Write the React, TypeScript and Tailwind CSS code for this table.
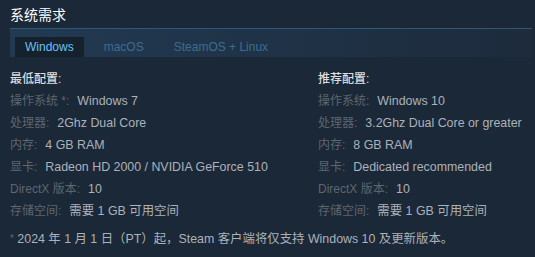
import React from "react";

const font = { fontFamily: '"Liberation Sans", Arial, "Noto Sans CJK SC", sans-serif' };

const minRows: [string, string][] = [
  ["操作系统 *:", "Windows 7"],
  ["处理器:", "2Ghz Dual Core"],
  ["内存:", "4 GB RAM"],
  ["显卡:", "Radeon HD 2000 / NVIDIA GeForce 510"],
  ["DirectX 版本:", "10"],
  ["存储空间:", "需要 1 GB 可用空间"],
];

const recRows: [string, string][] = [
  ["操作系统:", "Windows 10"],
  ["处理器:", "3.2Ghz Dual Core or greater"],
  ["内存:", "8 GB RAM"],
  ["显卡:", "Dedicated recommended"],
  ["DirectX 版本:", "10"],
  ["存储空间:", "需要 1 GB 可用空间"],
];

function Column({ title, rows, width }: { title: string; rows: [string, string][]; width: string }) {
  return (
    <div className={width}>
      <div className="text-[12px] leading-[21px] text-[#dcdedf] font-medium">{title}</div>
      {rows.map(([l, v]) => (
        <div key={l} className="leading-[22px] whitespace-nowrap flex items-baseline">
          <span className="text-[12px] text-[#5e666e]">{l}</span>
          <span className="text-[12.4px] text-[#acb2b8] ml-[8px]">{v}</span>
        </div>
      ))}
    </div>
  );
}

export default function App() {
  return (
    <div className="w-[535px] h-[257px] bg-[#1b2838] pl-[10px] pr-[3px] pt-[7px] overflow-hidden" style={font}>
      <div className="text-[14px] leading-[16px] text-[#ffffff]">系统需求</div>
      <div className="mt-[5px] h-[29px] border-t border-[#2f5878] bg-gradient-to-r from-[#213a52] to-[#1d2b3c] flex items-end pl-[5px] gap-[10px]">
        <div className="h-[20px] px-[10px] bg-[#16212e] text-[#67c1f5] text-[12px] leading-[20px]">Windows</div>
        <div className="h-[20px] px-[10px] text-[#3d6d8f] text-[12px] leading-[20px]">macOS</div>
        <div className="h-[20px] px-[10px] text-[#3d6d8f] text-[12px] leading-[20px]">SteamOS + Linux</div>
      </div>
      <div className="mt-[12px] flex">
        <Column title="最低配置:" rows={minRows} width="w-[308px]" />
        <Column title="推荐配置:" rows={recRows} width="flex-1" />
      </div>
      <div className="mt-[6px] text-[12.4px] leading-[22px] text-[#acb2b8] whitespace-nowrap">
        <span className="text-[#5e666e] text-[10px] align-top">*</span> 2024 年 1 月 1 日（PT）起，Steam 客户端将仅支持 Windows 10 及更新版本。
      </div>
    </div>
  );
}
